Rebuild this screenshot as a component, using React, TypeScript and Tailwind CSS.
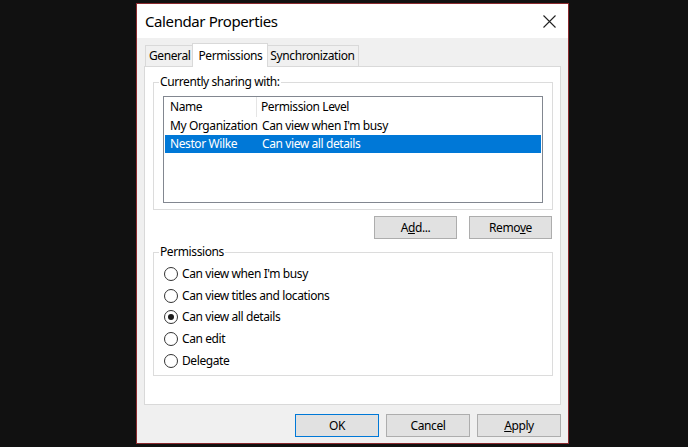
import React from "react";

const font = { fontFamily: '"Noto Sans", "Open Sans", sans-serif' };

function Tab({ label, active }: { label: string; active?: boolean }) {
  if (active) {
    return (
      <div className="relative z-10 -mx-[2px] -mb-px flex h-[24px] items-center border border-b-0 border-[#d9d9d9] bg-white px-[5px] text-[12px] text-black">
        {label}
      </div>
    );
  }
  return (
    <div className="flex h-[21px] items-center border border-b-0 border-[#d9d9d9] bg-[#f0f0f0] px-[3px] text-[12px] text-black">
      {label}
    </div>
  );
}

function Btn({
  children,
  w = "w-[84px]",
  primary,
}: {
  children: React.ReactNode;
  w?: string;
  primary?: boolean;
}) {
  return (
    <div
      className={`flex h-[23px] ${w} items-center justify-center border ${
        primary ? "border-[#0078d7]" : "border-[#adadad]"
      } bg-[#e1e1e1] text-[12px] text-black`}
    >
      {children}
    </div>
  );
}

function Radio({ label, checked }: { label: string; checked?: boolean }) {
  return (
    <div className="flex h-[21.75px] items-center gap-[4px]">
      <div className="flex h-[14px] w-[14px] items-center justify-center rounded-full border border-[#333333] bg-white">
        {checked && <div className="h-[6px] w-[6px] rounded-full bg-[#1a1a1a]" />}
      </div>
      <span className="text-[12px] text-black">{label}</span>
    </div>
  );
}

export default function App() {
  return (
    <div
      className="h-[447px] w-[688px] overflow-hidden bg-[#111111] pl-[136px] pt-[3px] tracking-[-0.4px]"
      style={font}
    >
      <div className="flex h-[441px] w-[433px] flex-col border border-[#8a2a2e] bg-[#f0f0f0]">
        {/* Title bar */}
        <div className="flex h-[34px] items-center justify-between bg-white pl-[8px] pr-[12px]">
          <span className="text-[15px] text-black">Calendar Properties</span>
          <svg width="13" height="13" viewBox="0 0 13 13">
            <path d="M0.5 0.5 L12.5 12.5 M12.5 0.5 L0.5 12.5" stroke="#222" strokeWidth="1.1" />
          </svg>
        </div>

        {/* Body */}
        <div className="flex flex-1 flex-col px-[7px] pt-[5px]">
          <div className="flex h-[23px] items-end pl-[1px]">
            <Tab label="General" />
            <Tab label="Permissions" active />
            <Tab label="Synchronization" />
          </div>
          <div className="h-[339px] border border-[#d9d9d9] bg-white pl-[8px] pr-[7px] pt-[7px]">
            <fieldset className="border border-[#dcdcdc] pb-[6px]">
              <legend className="ml-[5px] px-[1px] text-[12px] leading-[16px] text-black">
                Currently sharing with:
              </legend>
              <div className="mx-[9px] mt-[6px] h-[107px] border border-[#828790] bg-white">
                <div className="flex h-[20px] items-center text-[12px] text-black">
                  <div className="flex h-full w-[93px] items-center border-r border-[#e5e5e5] pl-[6px]">Name</div>
                  <div className="pl-[4px]">Permission Level</div>
                </div>
                <div className="flex h-[18px] items-center text-[12px] text-black">
                  <div className="w-[93px] whitespace-nowrap pl-[6px]">My Organization</div>
                  <div className="pl-[5px]">Can view when I'm busy</div>
                </div>
                <div className="mx-[1px] flex h-[18px] items-center bg-[#0078d7] text-[12px] text-white">
                  <div className="w-[92px] pl-[5px]">Nestor Wilke</div>
                  <div className="pl-[5px]">Can view all details</div>
                </div>
              </div>
            </fieldset>

            <div className="mt-[6px] flex justify-end gap-[12px] pr-[1px]">
              <Btn w="w-[83px]">
                <span>
                  A<span className="underline">d</span>d...
                </span>
              </Btn>
              <Btn w="w-[83px]">
                <span>
                  Remo<span className="underline">v</span>e
                </span>
              </Btn>
            </div>

            <fieldset className="mt-[5px] border border-[#dcdcdc] pb-[3px]">
              <legend className="ml-[5px] px-[1px] text-[12px] leading-[16px] text-black">Permissions</legend>
              <div className="flex flex-col pl-[10px] pt-[3px]">
                <Radio label="Can view when I'm busy" />
                <Radio label="Can view titles and locations" />
                <Radio label="Can view all details" checked />
                <Radio label="Can edit" />
                <Radio label="Delegate" />
              </div>
            </fieldset>
          </div>

          <div className="mt-[9px] flex justify-end gap-[7px]">
            <Btn primary>OK</Btn>
            <Btn>Cancel</Btn>
            <Btn>
              <span>
                <span className="underline">A</span>pply
              </span>
            </Btn>
          </div>
        </div>
      </div>
    </div>
  );
}
